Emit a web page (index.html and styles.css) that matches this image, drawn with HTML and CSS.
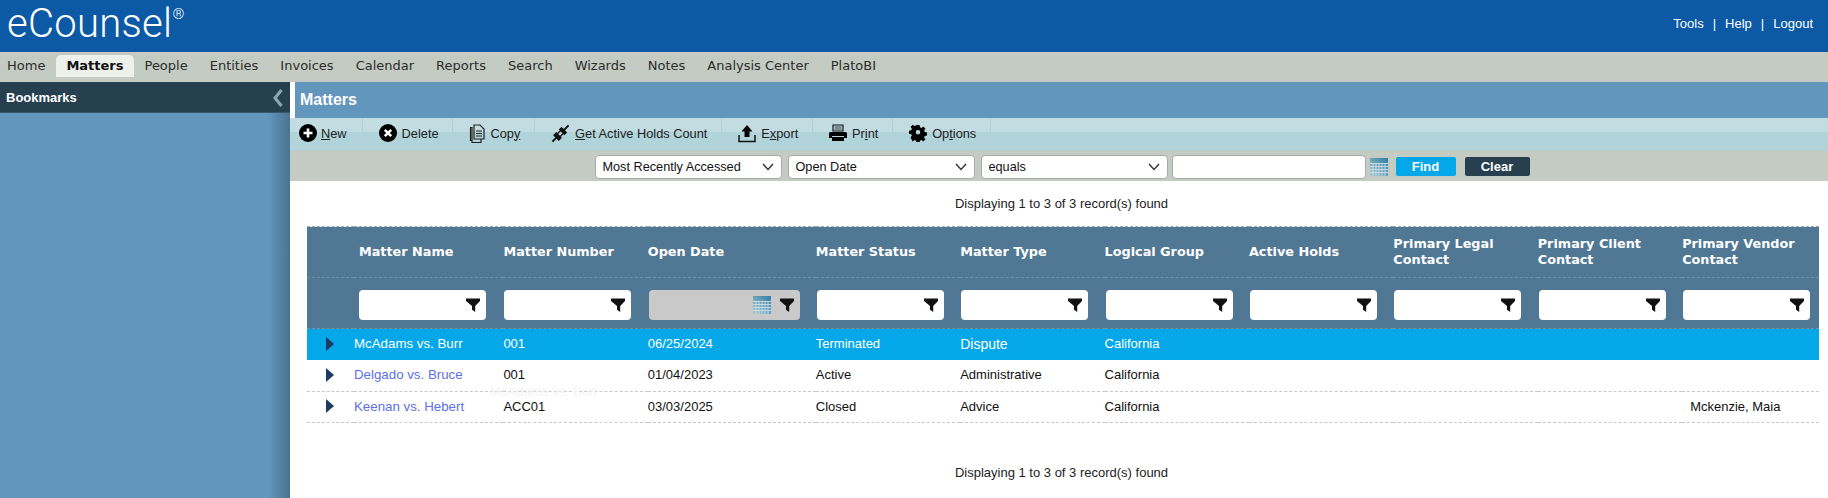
FILE: index.html
```html
<!DOCTYPE html>
<html lang="en">
<head>
  <meta charset="UTF-8" />
  <title>eCounsel - Matters</title>
  <link rel="stylesheet" href="styles.css">
</head>
<body>
  <svg class="defs" width="0" height="0">
    <symbol id="funnel" viewBox="0 0 16 16"><path d="M1 1.500h14v2.500L10.200 9V15L7 12.800V9L1 4z"/></symbol>
    <symbol id="cal" viewBox="0 0 18 18">
      <linearGradient id="calfill" x1="1" y1="0" x2="0" y2="1">
        <stop offset="0" stop-color="#2f7ea6"/>
        <stop offset="1" stop-color="#a9c9cf"/>
      </linearGradient>
      <rect width="18" height="18" fill="url(#calfill)"/>
      <path d="M0 5.500h18M0 8.500h18M0 11.500h18M0 14.500h18M3 5v13M6 5v13M9 5v13M12 5v13M15 5v13" stroke="#d5e4ea" stroke-width=".8"/>
    </symbol>
    <symbol id="caret" viewBox="0 0 8 14"><path d="M0 0l8 7-8 7z"/></symbol>
    <symbol id="chev" viewBox="0 0 12 8"><path d="M1 1l5 5.500L11 1" fill="none" stroke="#333" stroke-width="1.400"/></symbol>
  </svg>

  <header class="topbar">
    <div class="logo">eCounsel<sup>®</sup></div>
    <div class="toplinks"><a>Tools</a><i>|</i><a>Help</a><i>|</i><a>Logout</a></div>
  </header>

  <nav class="mainnav">
    <a>Home</a>
    <a class="active">Matters</a>
    <a>People</a>
    <a>Entities</a>
    <a>Invoices</a>
    <a>Calendar</a>
    <a>Reports</a>
    <a>Search</a>
    <a>Wizards</a>
    <a>Notes</a>
    <a>Analysis Center</a>
    <a>PlatoBI</a>
  </nav>

  <div class="page">
    <aside class="sidebar">
      <div class="sidebar-head">
        <span>Bookmarks</span>
        <svg width="10" height="18" viewBox="0 0 10 18"><path d="M8.500 1L2 9l6.500 8" fill="none" stroke="#8fa5b2" stroke-width="3"/></svg>
      </div>
    </aside>

    <main class="content">
      <h1 class="title">Matters</h1>

      <div class="toolbar">
        <a class="tool tool-new">
          <svg width="18" height="18" viewBox="0 0 18 18"><circle cx="9" cy="9" r="9"/><path d="M9 4.500v9M4.500 9h9" stroke="#fff" stroke-width="2.600"/></svg>
          <span><u>N</u>ew</span>
        </a>
        <a class="tool">
          <svg width="18" height="18" viewBox="0 0 18 18"><circle cx="9" cy="9" r="9"/><path d="M5.800 5.800l6.400 6.400M12.200 5.800l-6.400 6.400" stroke="#fff" stroke-width="2.600"/></svg>
          <span>Delete</span>
        </a>
        <a class="tool">
          <svg width="16" height="19" viewBox="0 0 16 19" fill="none" stroke="#222" stroke-width="1.200"><path d="M5 1h6l4 4v10H5z"/><path d="M3 3.500H1.500V16.500H3M3 3v15.500h9V15"/><path d="M7 7h6M7 9.500h6M7 12h6"/></svg>
          <span>Cop<u>y</u></span>
        </a>
        <a class="tool">
          <svg width="19" height="19" viewBox="0 0 19 19"><g transform="rotate(-45 9.500 9.500)" fill="#111"><path d="M-2 8.500h5v2h-5zM3 5.500h4.500v8H3zM11 5.500h4v8h-4zM15 8.500h6v2h-6zM7.500 6.800H11v1.400H7.500zM7.500 10.800H11v1.400H7.500z"/></g></svg>
          <span><u>G</u>et Active Holds Count</span>
        </a>
        <a class="tool">
          <svg width="18" height="19" viewBox="0 0 18 19"><path d="M9 1l5.500 6.500H11.500V13h-5V7.500H3.500z"/><path d="M1 11v6.500h16V11" fill="none" stroke="#111" stroke-width="1.500"/></svg>
          <span>E<u>x</u>port</span>
        </a>
        <a class="tool">
          <svg width="18" height="18" viewBox="0 0 18 18"><path d="M4 1h10v6H4z" fill="none" stroke="#111" stroke-width="1.200"/><path d="M5.500 3h7M5.500 5h7" stroke="#111" stroke-width=".8"/><path d="M1.500 8h15q1.500 0 1.500 1.500V14H15v-2H3v2H0V9.500Q0 8 1.500 8zM3 13h12v4H3z"/></svg>
          <span>Pr<u>i</u>nt</span>
        </a>
        <a class="tool">
          <svg width="18" height="18" viewBox="0 0 18 18"><path fill-rule="evenodd" d="M7.300 0h3.400l.5 2.500 1.600.7 2.100-1.500 2.400 2.400-1.500 2.100.7 1.600 2.500.5v3.400l-2.500.5-.7 1.600 1.500 2.100-2.400 2.400-2.100-1.500-1.600.7-.5 2.500H7.300l-.5-2.500-1.600-.7-2.100 1.500L.7 13.900l1.500-2.100-.7-1.600L-1 9.700V6.300l2.500-.5.7-1.600L.7 2.100 3.100-.3l2.100 1.500 1.600-.7zM9 5.500a2.500 2.500 0 1 0 0 5 2.500 2.500 0 0 0 0-5z" transform="translate(.9 1) scale(.9)"/></svg>
          <span>Op<u>t</u>ions</span>
        </a>
      </div>

      <div class="findbar">
        <label class="select">
          <select><option>Most Recently Accessed</option></select>
          <svg class="chev"><use href="#chev"/></svg>
        </label>
        <label class="select">
          <select><option>Open Date</option></select>
          <svg class="chev"><use href="#chev"/></svg>
        </label>
        <label class="select">
          <select><option>equals</option></select>
          <svg class="chev"><use href="#chev"/></svg>
        </label>
        <input class="find-input" type="text">
        <svg class="cal-icon"><use href="#cal"/></svg>
        <button class="btn btn-find">Find</button>
        <button class="btn btn-clear">Clear</button>
      </div>

      <p class="count count-top">Displaying 1 to 3 of 3 record(s) found</p>

      <table class="grid">
        <colgroup>
          <col class="c-arrow"><col class="c-name"><col class="c-std"><col class="c-date"><col class="c-std"><col class="c-std"><col class="c-std"><col class="c-std"><col class="c-std"><col class="c-std"><col>
        </colgroup>
        <thead>
          <tr class="head-row">
            <th></th>
            <th>Matter Name</th>
            <th>Matter Number</th>
            <th>Open Date</th>
            <th>Matter Status</th>
            <th>Matter Type</th>
            <th>Logical Group</th>
            <th>Active Holds</th>
            <th>Primary Legal Contact</th>
            <th>Primary Client Contact</th>
            <th>Primary Vendor Contact</th>
          </tr>
          <tr class="filter-row">
            <th></th>
            <th><div class="filter"><svg class="funnel"><use href="#funnel"/></svg></div></th>
            <th><div class="filter"><svg class="funnel"><use href="#funnel"/></svg></div></th>
            <th><div class="filter filter-date"><svg class="cal-small"><use href="#cal"/></svg><svg class="funnel"><use href="#funnel"/></svg></div></th>
            <th><div class="filter"><svg class="funnel"><use href="#funnel"/></svg></div></th>
            <th><div class="filter"><svg class="funnel"><use href="#funnel"/></svg></div></th>
            <th><div class="filter"><svg class="funnel"><use href="#funnel"/></svg></div></th>
            <th><div class="filter"><svg class="funnel"><use href="#funnel"/></svg></div></th>
            <th><div class="filter"><svg class="funnel"><use href="#funnel"/></svg></div></th>
            <th><div class="filter"><svg class="funnel"><use href="#funnel"/></svg></div></th>
            <th><div class="filter"><svg class="funnel"><use href="#funnel"/></svg></div></th>
          </tr>
        </thead>
        <tbody>
          <tr class="selected">
            <td class="arrow"><svg class="caret"><use href="#caret"/></svg></td>
            <td class="name">McAdams vs. Burr</td>
            <td>001</td>
            <td>06/25/2024</td>
            <td>Terminated</td>
            <td class="type-big">Dispute</td>
            <td>California</td>
            <td></td><td></td><td></td><td></td>
          </tr>
          <tr>
            <td class="arrow"><svg class="caret"><use href="#caret"/></svg></td>
            <td class="name"><a>Delgado vs. Bruce</a></td>
            <td>001</td>
            <td>01/04/2023</td>
            <td>Active</td>
            <td>Administrative</td>
            <td>California</td>
            <td></td><td></td><td></td><td></td>
          </tr>
          <tr>
            <td class="arrow"><svg class="caret"><use href="#caret"/></svg></td>
            <td class="name"><a>Keenan vs. Hebert</a></td>
            <td class="ghost-cell">ACC01<span class="ghost">McAdams vs. Burr</span></td>
            <td>03/03/2025</td>
            <td>Closed</td>
            <td>Advice</td>
            <td>California</td>
            <td></td><td></td><td></td>
            <td class="vendor">Mckenzie, Maia</td>
          </tr>
        </tbody>
      </table>

      <p class="count count-bottom">Displaying 1 to 3 of 3 record(s) found</p>
    </main>
  </div>
</body>
</html>
```

FILE: styles.css
```css
* {
  box-sizing: border-box;
}
html, body {
  height: 100%;
}
body {
  margin: 0;
  overflow: hidden;
  font-family: "Liberation Sans", Arial, sans-serif;
  font-size: 13px;
  color: #111;
  background: #fff;
}
.defs {
  position: absolute;
}

/* top bar */
.topbar {
  height: 52px;
  background: #0c5aa6;
  color: #fff;
  display: flex;
  justify-content: space-between;
  padding: 0 15px 0 7px;
}
.logo {
  font-family: Roboto, sans-serif;
  font-weight: 300;
  font-size: 40px;
  line-height: 47px;
  letter-spacing: .3px;
}
.logo sup {
  font-size: 15px;
  line-height: 0;
  vertical-align: 18px;
}
.toplinks {
  padding-top: 16px;
  font-size: 13px;
  display: flex;
  gap: 9px;
}
.toplinks i {
  font-style: normal;
}

/* main nav */
.mainnav {
  height: 30px;
  background: #c4cbc3;
  display: flex;
  padding: 3px 0 0 0;
  font-family: "DejaVu Sans", sans-serif;
  font-size: 13px;
  color: #2c2c2c;
}
.mainnav a {
  height: 22px;
  line-height: 22px;
  padding: 0 11px;
}
.mainnav a:first-child {
  padding-left: 7px;
}
.mainnav a.active {
  background: #eef0ec;
  border-radius: 5px 5px 0 0;
  padding: 0 10px;
  font-weight: bold;
  color: #111;
}

/* layout */
.page {
  display: flex;
  height: 416px;
}
.sidebar {
  width: 290px;
  flex: none;
  background: linear-gradient(to right, #6396bc 0, #6396bc 268px, #4b7391 290px);
}
.sidebar-head {
  height: 31px;
  background: #26404f;
  border-bottom: 1px solid #35566c;
  color: #fff;
  font-weight: bold;
  display: flex;
  align-items: center;
  justify-content: space-between;
  padding: 1px 7px 0 6px;
}
.content {
  flex: 1;
  min-width: 0;
}
.title {
  margin: 0 0 0 5px;
  height: 36px;
  line-height: 36px;
  padding-left: 5px;
  background: #6396bc;
  color: #fff;
  font-size: 16px;
}

/* toolbar */
.toolbar {
  height: 33px;
  display: flex;
  align-items: stretch;
  background: linear-gradient(to bottom, #c2dce1 0, #c2dce1 45%, #b1d4da 45%, #b1d4da 100%);
  border-bottom: 1px solid #b9cdcd;
  font-size: 12.800px;
}
.tool {
  display: flex;
  align-items: center;
  gap: 5px;
  padding: 0 13.800px 2px 16px;
  border-right: 1px solid #b4d0d4;
  color: #222;
}
.tool-new {
  gap: 4px;
  padding-left: 9px;
  padding-right: 15px;
}

/* find bar */
.findbar {
  height: 30px;
  background: #c4cbc3;
  display: flex;
  align-items: center;
  justify-content: center;
  gap: 6px;
  padding-left: 6px;
}
.select {
  position: relative;
  display: block;
  width: 187px;
  margin-top: 2px;
}
.select select {
  width: 100%;
  height: 24px;
  appearance: none;
  background: #fff;
  border: 1px solid #aaa;
  border-radius: 4px;
  padding: 0 7px;
  font: 12.700px "Liberation Sans", Arial, sans-serif;
  color: #111;
}
.chev {
  position: absolute;
  right: 8px;
  top: 8px;
  width: 12px;
  height: 8px;
  pointer-events: none;
}
.find-input {
  width: 194px;
  height: 24px;
  margin-top: 2px;
  border: 1px solid #aaa;
  border-radius: 4px;
  background: #fff;
  margin-left: -2px;
}
.cal-icon {
  width: 18px;
  height: 18px;
  margin-left: -2px;
  margin-top: 2px;
}
.btn {
  height: 19px;
  margin-top: 1px;
  border: none;
  border-radius: 2px;
  color: #fff;
  font: bold 13px "Liberation Sans", Arial, sans-serif;
  padding: 0;
}
.btn-find {
  width: 60px;
  margin-left: 2px;
  background: #04a7e8;
}
.btn-clear {
  width: 65px;
  margin-left: 3px;
  background: #26404f;
}

/* record counts */
.count {
  margin: 0;
  text-align: center;
  font-size: 13px;
  color: #222;
  padding-left: 5px;
}
.count-top {
  padding-top: 15px;
  height: 45px;
}
.count-bottom {
  padding-top: 42px;
}

/* grid */
.grid {
  width: 1512px;
  margin-left: 17px;
  border-collapse: collapse;
  table-layout: fixed;
}
.c-arrow {
  width: 47px;
}
.c-name {
  width: 149.400px;
}
.c-std {
  width: 144.400px;
}
.c-date {
  width: 168px;
}
.grid thead {
  background: #507894;
  color: #fff;
}
.head-row th {
  height: 51px;
  text-align: left;
  font-family: "DejaVu Sans", sans-serif;
  font-size: 12.800px;
  line-height: 16px;
  padding: 0 20px 0 0;
  border-top: 1px dashed #9aaab5;
  border-bottom: 1px dashed #6f90a6;
}
.head-row th:nth-child(2),
.filter-row th:nth-child(2) {
  padding-left: 5px;
}
.filter-row th {
  height: 51px;
  padding: 0 0 0 1px;
  border-bottom: 1px dashed #6f90a6;
}
.filter {
  width: 127px;
  height: 30px;
  margin-top: 3px;
  background: #fff;
  border-radius: 4px;
  display: flex;
  align-items: center;
  justify-content: flex-end;
  gap: 8px;
  padding-right: 5px;
}
.filter-date {
  width: 151px;
  background: #c9c9c9;
}
.funnel {
  width: 16px;
  height: 16px;
  fill: #111;
}
.cal-small {
  width: 18px;
  height: 18px;
}
.grid td {
  height: 31.300px;
  padding: 0 0 1px 0;
  border-bottom: 1px dashed #c9c9c9;
  font-size: 13px;
  color: #111;
}
.grid .arrow {
  padding-left: 19px;
}
.caret {
  display: block;
  width: 8px;
  height: 14px;
  fill: #1d3a63;
}
.grid .name {
  font-size: 13.300px;
  padding-right: 4px;
  white-space: nowrap;
}
.name a {
  color: #5c70ea;
}
.grid .selected td {
  background: #04a7e8;
  color: #fff;
  border-bottom: none;
}
.grid .type-big {
  font-size: 14px;
}
.grid .vendor {
  padding-left: 8px;
}
.ghost-cell {
  position: relative;
}
.ghost {
  position: absolute;
  left: -14px;
  top: -7px;
  font-size: 13.300px;
  line-height: 14px;
  color: #f3f3f3;
  white-space: nowrap;
}
```
